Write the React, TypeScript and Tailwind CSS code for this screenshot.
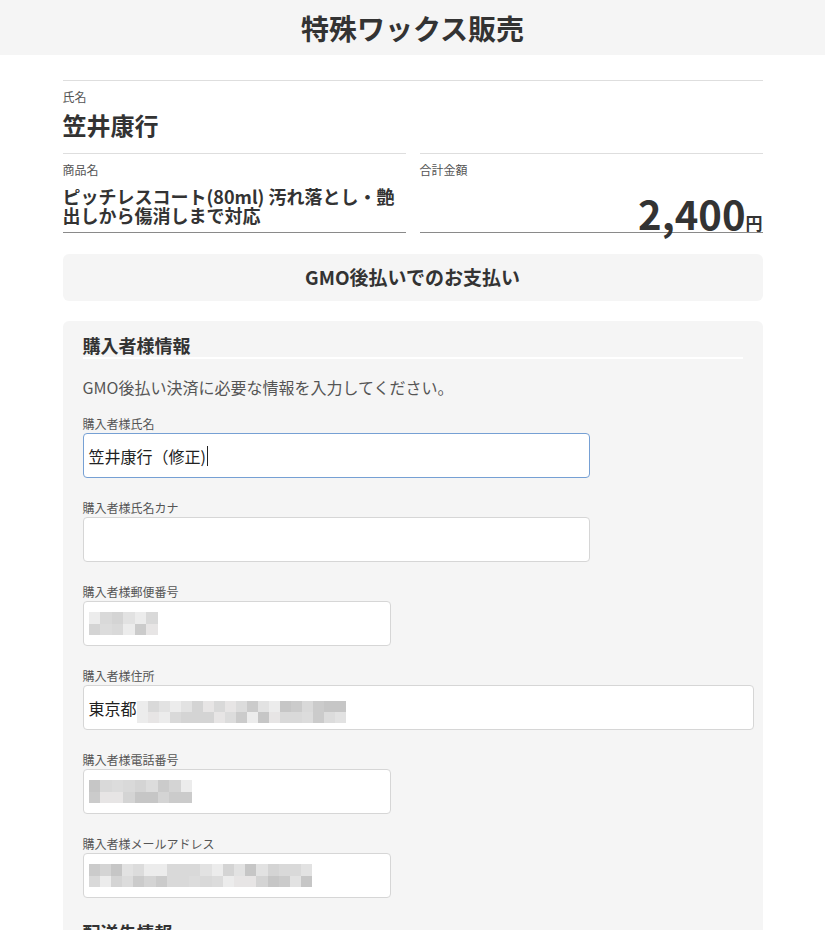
import type { ReactNode } from 'react';

const font = { fontFamily: '"Noto Sans CJK JP", "Noto Sans", sans-serif' };

// deterministic mosaic for masked personal data
function Mosaic({ cols, rows, seed, cell = 11 }: { cols: number; rows: number; seed: number; cell?: number }) {
  const shades = ['#d4d4d4', '#e2e2e2', '#cbcbcb', '#ececec', '#d9d9d9', '#c6c6c6', '#e7e5e5', '#dcdcdc'];
  let s = seed;
  const next = () => {
    s = (s * 9301 + 49297) % 233280;
    return shades[Math.floor((s / 233280) * shades.length)];
  };
  return (
    <div className="grid" style={{ gridTemplateColumns: `repeat(${cols}, ${cell}px)` }}>
      {Array.from({ length: cols * rows }).map((_, i) => (
        <span key={i} style={{ width: cell, height: cell, backgroundColor: next() }} />
      ))}
    </div>
  );
}

function Field({
  label,
  width,
  focused = false,
  children,
}: {
  label: string;
  width: string;
  focused?: boolean;
  children?: ReactNode;
}) {
  return (
    <div className="mt-[22px] first:mt-0">
      <p className="text-[12px] leading-4 text-[#555]">{label}</p>
      <div
        className={`mt-px flex h-[45px] items-center rounded-[4px] border bg-white px-[5px] text-[16px] text-[#222] ${width} ${
          focused ? 'border-[#76a0d4]' : 'border-[#d6d6d6]'
        }`}
      >
        {children}
      </div>
    </div>
  );
}

export default function App() {
  return (
    <div className="min-h-[930px] bg-white text-[#333]" style={font}>
      <header className="flex h-[55px] items-center justify-center bg-[#f5f5f5]">
        <h1 className="text-[28px] font-bold leading-none">特殊ワックス販売</h1>
      </header>

      <main className="mx-auto w-[700px] pt-[25px]">
        <section className="h-[73px] border-t border-[#dedede] pt-2">
          <p className="text-[12px] leading-4 text-[#555]">氏名</p>
          <p className="mt-[5px] text-[24px] font-bold leading-[30px]">笠井康行</p>
        </section>

        <div className="grid grid-cols-2 gap-[14px]">
          <div className="h-[80px] border-y border-t-[#dedede] border-b-[#8a8a8a] pt-[8px]">
            <p className="text-[12px] leading-4 text-[#555]">商品名</p>
            <p className="mt-[9px] pr-2 text-[18px] font-bold leading-[19px]">
              ピッチレスコート(80ml) 汚れ落とし・艶出しから傷消しまで対応
            </p>
          </div>
          <div className="flex h-[80px] flex-col border-y border-t-[#dedede] border-b-[#8a8a8a] pt-[8px]">
            <p className="text-[12px] leading-4 text-[#555]">合計金額</p>
            <div className="mt-auto flex items-end justify-end">
              <span className="text-[40px] font-bold leading-[0.95]">2,400</span>
              <span className="mb-[1px] text-[17px] font-bold leading-none">円</span>
            </div>
          </div>
        </div>

        <div className="mt-[21px] flex h-[47px] items-center justify-center rounded-md bg-[#f5f5f5]">
          <p className="text-[19px] font-bold">GMO後払いでのお支払い</p>
        </div>

        <section className="mt-5 rounded-md bg-[#f5f5f5] px-5 pt-3 pb-6">
          <h2 className="border-b-2 border-white text-[18px] font-bold leading-6">購入者様情報</h2>
          <p className="mt-[17px] text-[16px] leading-[22px] text-[#555]">
            GMO後払い決済に必要な情報を入力してください。
          </p>

          <div className="mt-[18px]">
            <Field label="購入者様氏名" width="w-[507px]" focused>
              <span>笠井康行（修正)</span>
              <span className="ml-px h-[20px] w-px bg-[#222]" />
            </Field>
            <Field label="購入者様氏名カナ" width="w-[507px]" />
            <Field label="購入者様郵便番号" width="w-[308px]">
              <Mosaic cols={6} rows={2} seed={7} cell={11.5} />
            </Field>
            <Field label="購入者様住所" width="w-[671px]">
              <span>東京都</span>
              <div className="mt-[8px]">
                <Mosaic cols={19} rows={2} seed={31} />
              </div>
            </Field>
            <Field label="購入者様電話番号" width="w-[308px]">
              <Mosaic cols={9} rows={2} seed={13} cell={11.5} />
            </Field>
            <Field label="購入者様メールアドレス" width="w-[308px]">
              <Mosaic cols={20} rows={2} seed={53} cell={11.2} />
            </Field>
          </div>

          <h2 className="mt-[22px] border-b-2 border-white text-[18px] font-bold leading-6">配送先情報</h2>
        </section>
      </main>
    </div>
  );
}
